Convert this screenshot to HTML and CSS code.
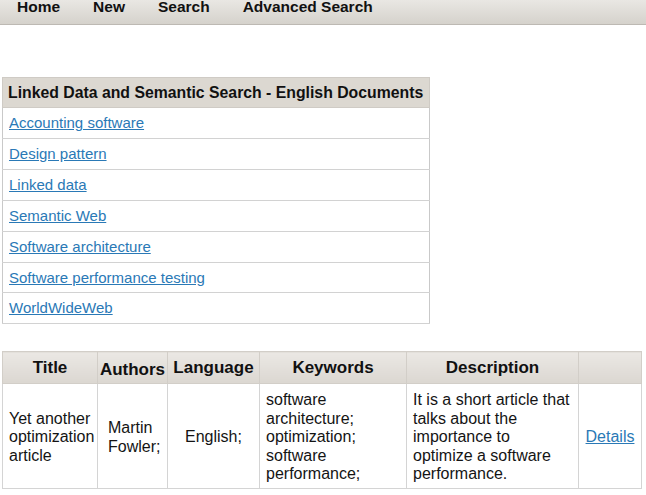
FILE: index.html
```html
<!DOCTYPE html>
<html>
<head>
<meta charset="utf-8">
<link rel="stylesheet" href="styles.css">
</head>
<body>
<nav class="topnav">
  <a class="nav-link" href="#">Home</a>
  <a class="nav-link" href="#">New</a>
  <a class="nav-link" href="#">Search</a>
  <a class="nav-link" href="#">Advanced Search</a>
</nav>
<main class="content">
  <table class="topics">
    <thead>
      <tr><th>Linked Data and Semantic Search - English Documents</th></tr>
    </thead>
    <tbody>
      <tr><td><a href="#">Accounting software</a></td></tr>
      <tr><td><a href="#">Design pattern</a></td></tr>
      <tr><td><a href="#">Linked data</a></td></tr>
      <tr><td><a href="#">Semantic Web</a></td></tr>
      <tr><td><a href="#">Software architecture</a></td></tr>
      <tr><td><a href="#">Software performance testing</a></td></tr>
      <tr><td><a href="#">WorldWideWeb</a></td></tr>
    </tbody>
  </table>
  <table class="docs">
    <colgroup>
      <col class="c-title"><col class="c-authors"><col class="c-lang"><col class="c-kw"><col class="c-desc"><col class="c-link">
    </colgroup>
    <thead>
      <tr>
        <th>Title</th>
        <th class="th-low">Authors</th>
        <th>Language</th>
        <th>Keywords</th>
        <th>Description</th>
        <th></th>
      </tr>
    </thead>
    <tbody>
      <tr>
        <td>Yet another optimization article</td>
        <td class="authors">Martin Fowler;</td>
        <td class="center">English;</td>
        <td>software architecture; optimization; software performance;</td>
        <td>It is a short article that talks about the importance to optimize a software performance.</td>
        <td class="center"><a href="#">Details</a></td>
      </tr>
    </tbody>
  </table>
</main>
</body>
</html>
```
FILE: styles.css
```css
html, body {
  margin: 0;
  padding: 0;
  background: #ffffff;
}
body {
  font-family: "Liberation Sans", Arial, sans-serif;
  color: #141414;
}
.topnav {
  height: 24px;
  display: flex;
  align-items: flex-start;
  padding-left: 17px;
  gap: 33px;
  background: linear-gradient(#e9e7e3, #d5d2cc);
  border-bottom: 1px solid #bdb9b3;
  overflow: hidden;
}
.nav-link {
  font-size: 15.5px;
  font-weight: bold;
  line-height: 16px;
  margin-top: -1px;
  color: #111;
  text-decoration: none;
}
.content {
  padding: 52px 6px 0 2px;
}
a {
  color: #2a79b6;
  text-decoration: underline;
}
.topics {
  width: 428px;
  border-collapse: collapse;
  border: 1px solid #c9c9c9;
  font-size: 15px;
}
.topics th {
  background: #dcd8d1;
  text-align: left;
  font-size: 15.8px;
  font-weight: bold;
  padding: 6px 5px 5px 5px;
  height: 18px;
  line-height: 18px;
  border: 1px solid #cfcbc5;
  color: #111;
}
.topics td {
  padding: 6px 6px;
  height: 17.9px;
  line-height: 17.9px;
  border-top: 1px solid #d2d2d2;
  border-bottom: 1px solid #d2d2d2;
}
.docs {
  margin-top: 27px;
  width: 639px;
  border-collapse: collapse;
  table-layout: fixed;
  border: 1px solid #cfcfcf;
  font-size: 16px;
}
.c-title { width: 95px; }
.c-authors { width: 70px; }
.c-lang { width: 92px; }
.c-kw { width: 147px; }
.c-desc { width: 172px; }
.c-link { width: 63px; }
.docs th {
  background: linear-gradient(#ebe8e4, #dbd7d1);
  font-size: 17px;
  font-weight: bold;
  height: 31px;
  padding: 0;
  border: 1px solid #d2cec8;
  color: #111;
}
.docs th.th-low {
  padding-top: 4px;
  height: 27px;
}
.docs td {
  border: 1px solid #d4d4d4;
  padding: 7px 6px 4px 6px;
  line-height: 18.5px;
  vertical-align: middle;
  text-align: left;
}
.docs td.authors {
  padding-left: 10px;
}
.docs td.center {
  text-align: center;
}
```
